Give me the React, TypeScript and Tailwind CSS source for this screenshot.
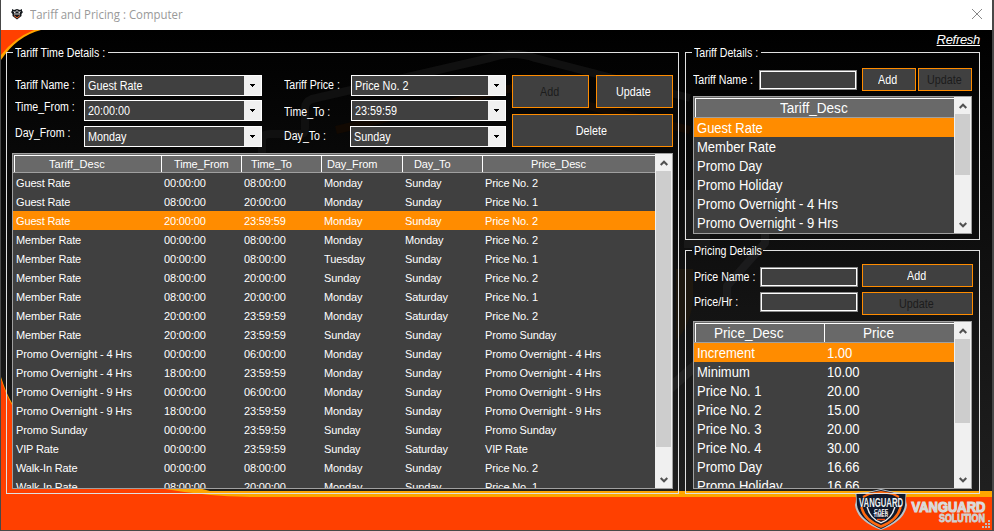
import type { ReactNode } from 'react';

const tariffTimes: string[][] = [
  ['Guest Rate', '00:00:00', '08:00:00', 'Monday', 'Sunday', 'Price No. 2'],
  ['Guest Rate', '08:00:00', '20:00:00', 'Monday', 'Sunday', 'Price No. 1'],
  ['Guest Rate', '20:00:00', '23:59:59', 'Monday', 'Sunday', 'Price No. 2'],
  ['Member Rate', '00:00:00', '08:00:00', 'Monday', 'Monday', 'Price No. 2'],
  ['Member Rate', '00:00:00', '08:00:00', 'Tuesday', 'Sunday', 'Price No. 1'],
  ['Member Rate', '08:00:00', '20:00:00', 'Sunday', 'Sunday', 'Price No. 2'],
  ['Member Rate', '08:00:00', '20:00:00', 'Monday', 'Saturday', 'Price No. 1'],
  ['Member Rate', '20:00:00', '23:59:59', 'Monday', 'Saturday', 'Price No. 2'],
  ['Member Rate', '20:00:00', '23:59:59', 'Sunday', 'Sunday', 'Promo Sunday'],
  ['Promo Overnight - 4 Hrs', '00:00:00', '06:00:00', 'Monday', 'Sunday', 'Promo Overnight - 4 Hrs'],
  ['Promo Overnight - 4 Hrs', '18:00:00', '23:59:59', 'Monday', 'Sunday', 'Promo Overnight - 4 Hrs'],
  ['Promo Overnight - 9 Hrs', '00:00:00', '06:00:00', 'Monday', 'Sunday', 'Promo Overnight - 9 Hrs'],
  ['Promo Overnight - 9 Hrs', '18:00:00', '23:59:59', 'Monday', 'Sunday', 'Promo Overnight - 9 Hrs'],
  ['Promo Sunday', '00:00:00', '23:59:59', 'Sunday', 'Sunday', 'Promo Sunday'],
  ['VIP Rate', '00:00:00', '23:59:59', 'Sunday', 'Saturday', 'VIP Rate'],
  ['Walk-In Rate', '00:00:00', '08:00:00', 'Monday', 'Sunday', 'Price No. 2'],
  ['Walk-In Rate', '08:00:00', '20:00:00', 'Monday', 'Sunday', 'Price No. 1'],
];

const tariffs = ['Guest Rate', 'Member Rate', 'Promo Day', 'Promo Holiday', 'Promo Overnight - 4 Hrs', 'Promo Overnight - 9 Hrs'];

const prices: string[][] = [
  ['Increment', '1.00'],
  ['Minimum', '10.00'],
  ['Price No. 1', '20.00'],
  ['Price No. 2', '15.00'],
  ['Price No. 3', '20.00'],
  ['Price No. 4', '30.00'],
  ['Promo Day', '16.66'],
  ['Promo Holiday', '16.66'],
];

/* Condensed 12px face used by labels and captions. */
function Narrow({ children }: { children: ReactNode }) {
  return <span className="inline-block origin-left scale-x-[0.885] whitespace-nowrap">{children}</span>;
}

/* Slightly condensed 14px face used by the two right-hand lists. */
function ListText({ children }: { children: ReactNode }) {
  return <span className="inline-block origin-left scale-x-[0.93] whitespace-nowrap">{children}</span>;
}

function ListHeading({ children }: { children: ReactNode }) {
  return <span className="inline-block origin-left scale-x-[0.97] whitespace-nowrap">{children}</span>;
}

function Label({ children, className }: { children: ReactNode; className: string }) {
  return (
    <div className={`h-[14px] shrink-0 text-[12px] leading-[14px] ${className}`}>
      <Narrow>{children}</Narrow>
    </div>
  );
}

function Legend({ children, className }: { children: ReactNode; className: string }) {
  return (
    <legend className={`ml-[6px] h-[13px] pl-[2px] text-[12px] leading-[14px] ${className}`}>
      <Narrow>{children}</Narrow>
    </legend>
  );
}

function Select({ value, className }: { value: string; className: string }) {
  return (
    <div className={`flex h-[21px] border border-white bg-[#404040] ${className}`}>
      <div className="flex-1 pl-[3px] text-[12px] leading-[20px]">
        <span className="inline-block origin-left scale-x-[0.9] whitespace-nowrap">{value}</span>
      </div>
      <div className="flex w-[17px] items-center justify-center bg-[#f0f0f0]">
        <svg width="5" height="3" viewBox="0 0 5 3" shapeRendering="crispEdges">
          <path d="M0 0h5v1h-1v1h-1v1h-1v-1h-1v-1h-1z" fill="#000" />
        </svg>
      </div>
    </div>
  );
}

function Button({ children, disabled, className }: { children: ReactNode; disabled?: boolean; className: string }) {
  return (
    <button
      className={`flex shrink-0 items-center justify-center border border-[#ff8c00] bg-[#404040] pr-[2px] text-[12px] leading-[14px] ${disabled ? 'text-[#1c1c1c]' : 'text-white'} ${className}`}
    >
      <span className="inline-block scale-x-[0.895]">{children}</span>
    </button>
  );
}

function Input({ className }: { className: string }) {
  return (
    <div className={`h-[20px] w-[98px] shrink-0 border border-[#8a8a8a] ${className}`}>
      <div className="h-full border border-white bg-[#404040]" />
    </div>
  );
}

function Chevron({ down }: { down?: boolean }) {
  return (
    <div className="flex h-[17px] shrink-0 items-center justify-center">
      <svg width="8" height="6" viewBox="0 0 8 6">
        <path d={down ? 'M0.7 1L4 4.3L7.3 1' : 'M0.7 5L4 1.7L7.3 5'} fill="none" stroke="#505050" strokeWidth="2" />
      </svg>
    </div>
  );
}

function Scrollbar({ thumb }: { thumb: string }) {
  return (
    <div className="flex w-[17px] shrink-0 flex-col bg-[#f0f0f0]">
      <Chevron />
      <div className={`ml-px w-[15px] bg-[#cdcdcd] ${thumb}`} />
      <div className="flex-1" />
      <Chevron down />
    </div>
  );
}

function HeaderCell({ children, className }: { children: ReactNode; className: string }) {
  return <div className={`shrink-0 whitespace-nowrap border-l border-white ${className}`}>{children}</div>;
}

function Backdrop() {
  return (
    <svg className="absolute left-0 top-0" width="991" height="500" viewBox="1 30 991 500">
      <defs>
        <linearGradient id="bg" x1="0" y1="0" x2="0" y2="1">
          <stop offset="0" stopColor="#000" />
          <stop offset="1" stopColor="#222" />
        </linearGradient>
      </defs>
      <rect x="1" y="30" width="991" height="500" fill="url(#bg)" />
      <g fill="none" strokeLinejoin="round">
        <path d="M262 160V140Q262 134 270 134H300Q305 134 305 128V108Q305 102 312 99L490 58Q513 50 535 58L690 98" stroke="#101010" strokeWidth="8" />
        <path d="M336 130L513 88L690 130" stroke="#120902" strokeWidth="8" />
        <path d="M765 168V243L727 286V300" stroke="#1b1b1c" strokeWidth="8" />
        <path d="M696 365L670 388L655 410" stroke="#222" strokeWidth="10" />
        <path d="M676 269H693V300Q690 327 676 340Z" fill="#1e180f" />
        <path d="M684 190V248H710V190" fill="#191919" />
      </g>
      <path d="M1 30H41Q17 36 1 60Z" fill="#ffa500" />
      <path d="M1 30H34Q14 38 1 55Z" fill="#ff4000" />
      <path d="M1 377Q6 393 12 403V440L210 491L992 491V530H1Z" fill="#ffa500" />
      <path d="M1 379Q6 395 12 405V440L165 489Q205 496 250 497L992 497V530H1Z" fill="#ff4000" />
    </svg>
  );
}

function Logo() {
  return (
    <svg className="absolute bottom-0 right-0" width="140" height="42" viewBox="852 488 140 42">
      <defs>
        <linearGradient id="steel" x1="0" y1="0" x2="0" y2="1">
          <stop offset="0" stopColor="#f2f2f2" />
          <stop offset="1" stopColor="#c4c4c4" />
        </linearGradient>
      </defs>
      <path d="M855 493L868 492L881 489L894 492L907 493Q905 499 907 505Q905 521 881 530Q857 521 855 505Q857 499 855 493Z" fill="#b9c3ca" />
      <path d="M856.500 494L868 493L881 490L894 493L905.500 494L905 505Q903 519 881 529Q859 519 857 505Z" fill="#10192b" />
      <path d="M863 497L869 494L881 492L893 494L899 497" fill="none" stroke="#ff6a10" strokeWidth="2" />
      <path d="M861.500 507Q864 520 881 526.500Q898 520 900.500 507" fill="none" stroke="#ff6a10" strokeWidth="2.500" />
      <path d="M866.500 507H895.500Q893 519 881 523.500Q869 519 866.500 507Z" fill="#e8ecee" />
      <path d="M868 507H894Q891.500 518 881 522Q870.500 518 868 507Z" fill="#10192b" />
      <g fontFamily="'Liberation Sans',Arial,sans-serif" fontWeight="700">
        <text transform="translate(859 506.500) scale(0.62 1)" fontSize="12.500" fill="#eef2f3">VANGUARD</text>
        <text transform="translate(874 512.600) scale(0.52 0.47)" fontSize="10" fill="#fff">CAFE</text>
        <text transform="translate(873.500 517.400) scale(0.47 0.47)" fontSize="10" fill="#fff">TIMER</text>
        <text transform="translate(911.500 512.200) scale(0.865 1)" fontSize="15" fill="url(#steel)" stroke="#dadada" strokeWidth="1.200">VANGUARD</text>
        <text transform="translate(939 522.300) scale(0.89 1)" fontSize="10" fill="#d6d6d6" stroke="#d0d0d0" strokeWidth="0.800">SOLUTION</text>
      </g>
      <path d="M877 519.500H885" stroke="#ff5010" strokeWidth="1.500" />
      <path d="M988 520h2v2h-2zM985 523h2v2h-2zM988 523h2v2h-2zM982 526h2v2h-2zM985 526h2v2h-2zM988 526h2v2h-2z" fill="#bdbdbd" />
    </svg>
  );
}

export default function App() {
  return (
    <div className="flex h-[531px] w-[994px] flex-col overflow-hidden border-b border-l border-r-2 border-[#484848] bg-black font-['Liberation_Sans',Arial,sans-serif] text-white">
      <header className="flex h-[30px] shrink-0 items-center bg-white pl-[10px] pr-[9px]">
        <svg width="12" height="12" viewBox="0 0 12 12" className="-mt-[2px]">
          <path d="M1 1L3 2L6 1L9 2L11 1V3L12 4L10.500 6V8L6 11.500L1.500 8V6L0 4L1 3Z" fill="#15191d" />
          <path d="M2.500 3.500L4 5V3M6 2V4M8 3V5L9.500 3.500M3 6H9" fill="none" stroke="#eee" strokeWidth="0.900" />
          <path d="M3 7.500L6 10L9 7.500" fill="none" stroke="#ef672c" strokeWidth="1" />
        </svg>
        <h1 className="ml-[7px] flex-1 font-['Open_Sans','Noto_Sans',sans-serif] text-[12px] leading-[16px] text-[#999]">
          <span className="inline-block origin-left scale-x-[0.95]">Tariff and Pricing : Computer</span>
        </h1>
        <svg width="12" height="12" viewBox="0 0 12 12" className="-mt-[2px]">
          <path d="M1 1L11 11M11 1L1 11" stroke="#888" strokeWidth="1" />
        </svg>
      </header>

      <main className="relative h-[500px] overflow-hidden">
        <Backdrop />
        <Logo />
        <div className="relative">
          <div className="flex h-[16px] justify-end pr-[12px]">
            <a className="mt-[3px] text-[13px] italic leading-[14px] tracking-[-0.3px] underline">Refresh</a>
          </div>

          <div className="flex gap-[6px] pl-[5px]">
            <fieldset className="h-[448px] w-[673px] min-w-0 border border-[#e0e0e0]">
              <Legend className="w-[95px]">Tariff Time Details :</Legend>
              <div className="mt-[16px] flex h-[72px] pl-[8px]">
                <div className="w-[69px]">
                  <Label className="mt-[3px]">Tariff Name :</Label>
                  <Label className="mt-[8px]">Time_From :</Label>
                  <Label className="mt-[12px]">Day_From :</Label>
                </div>
                <div className="flex w-[178px] flex-col">
                  <Select className="" value="Guest Rate" />
                  <Select className="mt-[4px]" value="20:00:00" />
                  <Select className="mt-[5px]" value="Monday" />
                </div>
                <div className="ml-[22px] w-[66px]">
                  <Label className="mt-[3px]">Tariff Price :</Label>
                  <Label className="mt-[13px]">Time_To :</Label>
                  <Label className="mt-[10px]">Day_To :</Label>
                </div>
                <div className="flex w-[156px] flex-col">
                  <Select className="ml-px" value="Price No. 2" />
                  <Select className="ml-px mt-[4px]" value="23:59:59" />
                  <Select className="mt-[5px]" value="Sunday" />
                </div>
                <div className="ml-[6px] w-[161px]">
                  <div className="flex justify-between">
                    <Button disabled className="h-[33px] w-[77px]">Add</Button>
                    <Button className="h-[33px] w-[77px]">Update</Button>
                  </div>
                  <Button className="mt-[6px] h-[33px] w-[161px]">Delete</Button>
                </div>
              </div>

              <div className="ml-[5px] mt-[6px] flex h-[336px] w-[661px] border border-[#a0a0a0] bg-[#404040] text-[11px] tracking-[-0.14px]">
                <div className="flex-1 overflow-hidden">
                  <div className="flex h-[19px] border-b border-[#a0a0a0] bg-[#696969] pl-px pt-px leading-[17px]">
                    <div className="flex w-full border-t border-white">
                      <HeaderCell className="w-[147px] pl-[34px] leading-[16px] tracking-[0.1px]">Tariff_Desc</HeaderCell>
                      <HeaderCell className="w-[80px] pl-[12px] leading-[16px]">Time_From</HeaderCell>
                      <HeaderCell className="w-[80px] pl-[9px] leading-[16px]">Time_To</HeaderCell>
                      <HeaderCell className="w-[81px] pl-[5px] leading-[16px]">Day_From</HeaderCell>
                      <HeaderCell className="w-[80px] pl-[11px] leading-[16px]">Day_To</HeaderCell>
                      <HeaderCell className="flex-1 pl-[48px] leading-[16px]">Price_Desc</HeaderCell>
                    </div>
                  </div>
                  <div>
                    {tariffTimes.map((r, i) => (
                      <div key={i} className={`grid h-[19px] grid-cols-[148px_80px_80px_81px_80px_1fr] whitespace-nowrap pl-[3px] leading-[20px] ${i === 2 ? 'bg-[#ff8c00]' : ''}`}>
                        {r.map((c, j) => (
                          <span key={j}>{c}</span>
                        ))}
                      </div>
                    ))}
                  </div>
                </div>
                <Scrollbar thumb="h-[276px]" />
              </div>
            </fieldset>

            <div className="w-[295px]">
              <fieldset className="h-[194px] min-w-0 border border-[#e0e0e0]">
                <Legend className="w-[69px]">Tariff Details :</Legend>
                <div className="mt-[9px] flex h-[23px] pl-[7px]">
                  <Label className="mt-[5px] w-[66px]">Tariff Name :</Label>
                  <Input className="mt-[2px]" />
                  <Button className="ml-[5px] h-[23px] w-[54px]">Add</Button>
                  <Button disabled className="ml-[2px] h-[23px] w-[54px]">Update</Button>
                </div>
                <div className="ml-[7px] mt-[5px] flex h-[138px] w-[279px] border border-[#a0a0a0] bg-[#404040] text-[14px]">
                  <div className="flex-1 overflow-hidden">
                    <div className="h-[21px] border-b border-[#a0a0a0] bg-[#696969] pl-px pt-px">
                      <div className="h-full border-l border-t border-white pl-[84px] leading-[19px]">
                        <ListHeading>Tariff_Desc</ListHeading>
                      </div>
                    </div>
                    {tariffs.map((t, i) => (
                      <div key={t} className={`h-[19px] pl-[3px] leading-[21px] ${i === 0 ? 'bg-[#ff8c00]' : ''}`}>
                        <ListText>{t}</ListText>
                      </div>
                    ))}
                  </div>
                  <Scrollbar thumb="h-[61px]" />
                </div>
              </fieldset>

              <fieldset className="mt-[4px] h-[250px] min-w-0 border border-[#e0e0e0]">
                <Legend className="w-[71px]">Pricing Details</Legend>
                <div className="mt-[7px] flex h-[51px] pl-[8px]">
                  <div className="w-[66px]">
                    <Label className="mt-[6px]">Price Name :</Label>
                    <Label className="mt-[11px]">Price/Hr :</Label>
                  </div>
                  <div className="flex flex-col gap-[5px] pt-[3px]">
                    <Input className="" />
                    <Input className="" />
                  </div>
                  <div className="ml-[4px] flex flex-col gap-[5px]">
                    <Button className="h-[23px] w-[111px]">Add</Button>
                    <Button disabled className="h-[23px] w-[111px]">Update</Button>
                  </div>
                </div>
                <div className="ml-[7px] mt-[6px] flex h-[168px] w-[279px] border border-[#a0a0a0] bg-[#404040] text-[14px]">
                  <div className="flex-1 overflow-hidden">
                    <div className="h-[21px] border-b border-[#a0a0a0] bg-[#696969] pl-px pt-px">
                      <div className="flex h-full border-t border-white">
                        <HeaderCell className="w-[129px] pl-[18px] leading-[19px]">
                          <ListHeading>Price_Desc</ListHeading>
                        </HeaderCell>
                        <HeaderCell className="flex-1 pl-[38px] leading-[19px]">
                          <ListHeading>Price</ListHeading>
                        </HeaderCell>
                      </div>
                    </div>
                    {prices.map(([name, price], i) => (
                      <div key={name} className={`grid h-[19px] grid-cols-[130px_1fr] pl-[3px] leading-[21px] ${i === 0 ? 'bg-[#ff8c00]' : ''}`}>
                        <ListText>{name}</ListText>
                        <ListText>{price}</ListText>
                      </div>
                    ))}
                  </div>
                  <Scrollbar thumb="h-[84px]" />
                </div>
              </fieldset>
            </div>
          </div>
        </div>
      </main>
    </div>
  );
}
